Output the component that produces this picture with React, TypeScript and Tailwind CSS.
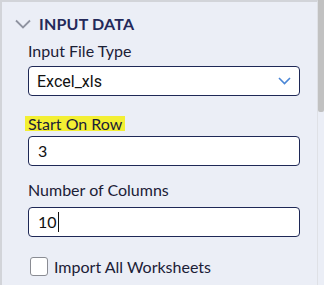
import React from 'react'

const Label: React.FC<{ children: React.ReactNode; highlight?: boolean }> = ({ children, highlight }) => (
  <div className="h-[20px] flex items-center">
    <span
      className={
        'text-[16px] text-[#1b2036] ' +
        (highlight ? 'inline-block leading-[15px] h-[15px] bg-[#f3ef33] px-[3px] -ml-[3px]' : 'leading-[18px]')
      }
    >
      {children}
    </span>
  </div>
)

export default function App() {
  return (
    <div className="w-[324px] h-[285px] flex bg-white overflow-hidden" style={{ fontFamily: 'Lato, "Noto Sans", sans-serif' }}>
      <div className="flex-1 h-full bg-[#ebeef6] border-l-2 border-t-2 border-l-[#d2d4d9] border-t-[#d2d4d9] border-r border-r-[#dfe1e6] flex flex-col pl-[26px] pr-[17px]">
        {/* Section header */}
        <div className="flex items-center gap-[8px] -ml-[13px] mt-[12px] h-[20px]">
          <svg width="16" height="10" viewBox="0 0 16 10" fill="none">
            <path d="M1 1.5L8 8.5L15 1.5" stroke="#8f93a0" strokeWidth="1.8" />
          </svg>
          <span className="text-[16px] font-bold tracking-[0.2px] text-[#23295a]">INPUT DATA</span>
        </div>

        <div className="mt-[7px]">
          <Label>Input File Type</Label>
        </div>
        <div className="mt-[5px] h-[30px] w-[272px] shrink-0 rounded-[4px] border border-[#1e2856] bg-white flex items-center justify-between pl-[8px] pr-[8px]">
          <span className="text-[16px] text-[#111] pt-[2px]" style={{ fontFamily: 'Roboto, Arial, sans-serif' }}>Excel_xls</span>
          <svg width="13" height="8" viewBox="0 0 13 8" fill="none">
            <path d="M1 1L6.5 6.5L12 1" stroke="#4a86d6" strokeWidth="1.6" />
          </svg>
        </div>

        <div className="mt-[17px]">
          <Label highlight>Start On Row</Label>
        </div>
        <div className="mt-[3px] h-[30px] w-[272px] shrink-0 rounded-[4px] border border-[#1e2856] bg-white flex items-center pl-[9px]">
          <span className="text-[16px] text-[#111]">3</span>
        </div>

        <div className="mt-[14px]">
          <Label>Number of Columns</Label>
        </div>
        <div className="mt-[7px] h-[30px] w-[272px] shrink-0 rounded-[4px] border border-[#1e2856] bg-white flex items-center pl-[9px]">
          <span className="text-[16px] text-[#111]">10</span>
          <span className="w-px h-[20px] bg-[#111] ml-[1px]" />
        </div>

        <div className="mt-[20px] flex items-center gap-[6px] ml-[2px] h-[19px]">
          <span className="w-[18px] h-[19px] rounded-[3px] border border-[#8a8c93] bg-white" />
          <span className="text-[16px] text-[#1b2036]">Import All Worksheets</span>
        </div>
      </div>
      {/* Scrollbar */}
      <div className="w-[6px] h-full bg-[#ebeef6] flex flex-col">
        <div className="h-[112px] w-full bg-[#c1c1c1] rounded-b-[2px]" />
      </div>
    </div>
  )
}
